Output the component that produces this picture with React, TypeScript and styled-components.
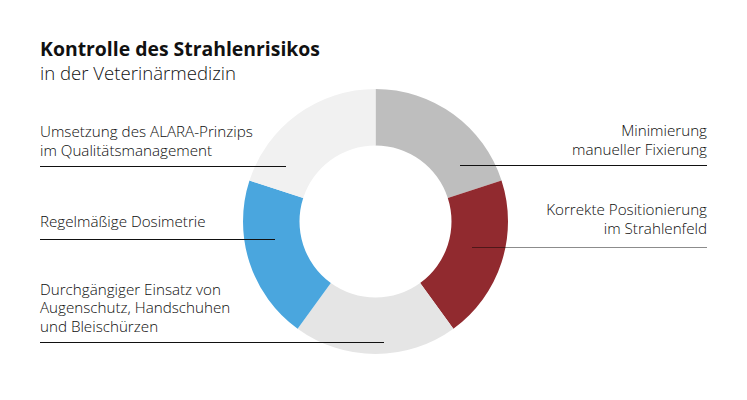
import React from 'react';
import styled, { createGlobalStyle } from 'styled-components';

const GlobalStyle = createGlobalStyle`
  html, body {
    margin: 0;
    padding: 0;
    background: #fff;
  }
  body {
    font-family: "Open Sans", "Liberation Sans", sans-serif;
    color: #1a1a1a;
  }
`;

type Segment = { color: string };

const segments: Segment[] = [
  { color: '#bebebe' },
  { color: '#912a2f' },
  { color: '#e5e5e5' },
  { color: '#4aa6de' },
  { color: '#f1f1f1' },
];

const OUTER = 132.5;
const INNER = 76;

// Punkt auf dem Kreis, 0° = oben, im Uhrzeigersinn
function point(r: number, deg: number) {
  const rad = (deg * Math.PI) / 180;
  return [OUTER + r * Math.sin(rad), OUTER - r * Math.cos(rad)];
}

function arcPath(start: number, end: number) {
  const [x1, y1] = point(OUTER, start);
  const [x2, y2] = point(OUTER, end);
  const [x3, y3] = point(INNER, end);
  const [x4, y4] = point(INNER, start);
  return `M${x1} ${y1} A${OUTER} ${OUTER} 0 0 1 ${x2} ${y2} L${x3} ${y3} A${INNER} ${INNER} 0 0 0 ${x4} ${y4} Z`;
}

function Donut() {
  const step = 360 / segments.length;
  return (
    <DonutSvg width={OUTER * 2} height={OUTER * 2} viewBox={`0 0 ${OUTER * 2} ${OUTER * 2}`}>
      {segments.map((s, i) => (
        <path key={i} d={arcPath(i * step, (i + 1) * step)} fill={s.color} />
      ))}
    </DonutSvg>
  );
}

function App() {
  return (
    <>
      <GlobalStyle />
      <Page>
        <Header>
          <Title>Kontrolle des Strahlenrisikos</Title>
          <Subtitle>in der Veterinärmedizin</Subtitle>
        </Header>
        <Chart>
          <Donut />
          <LeftColumn>
            <Label $line={246} $top={33} $pad={7}>
              Umsetzung des ALARA-Prinzips
              <br />
              im Qualitätsmanagement
            </Label>
            <Label $line={235} $top={45} $pad={8}>
              Regelmäßige Dosimetrie
            </Label>
            <Label $line={344} $top={40} $pad={7}>
              Durchgängiger Einsatz von
              <br />
              Augenschutz, Handschuhen
              <br />
              und Bleischürzen
            </Label>
          </LeftColumn>
          <RightColumn>
            <Label $line={247} $top={32} $pad={7} $right>
              Minimierung
              <br />
              manueller Fixierung
            </Label>
            <Label $line={235} $top={34} $pad={10} $right $soft>
              Korrekte Positionierung
              <br />
              im Strahlenfeld
            </Label>
          </RightColumn>
        </Chart>
      </Page>
    </>
  );
}

export default App;

const Page = styled.div`
  width: 747px;
  height: 400px;
  box-sizing: border-box;
  padding: 37px 40px 0 40px;
  overflow: hidden;
`;

const Header = styled.div`
  display: flex;
  flex-direction: column;
`;

const Title = styled.h1`
  margin: 0;
  font-size: 19.4px;
  line-height: 24px;
  font-weight: 700;
  color: #111;
`;

const Subtitle = styled.p`
  margin: 0;
  font-size: 18.6px;
  line-height: 24px;
  font-weight: 300;
  color: #111;
`;

const Chart = styled.div`
  display: grid;
  grid-template-areas: 'stack';
  margin-top: 4px;
`;

const DonutSvg = styled.svg`
  grid-area: stack;
  justify-self: start;
  margin-left: 202.5px;
  display: block;
`;

const LeftColumn = styled.div`
  grid-area: stack;
  display: flex;
  flex-direction: column;
  align-items: flex-start;
`;

const RightColumn = styled.div`
  grid-area: stack;
  display: flex;
  flex-direction: column;
  align-items: flex-end;
`;

const Label = styled.div<{ $line: number; $top: number; $pad: number; $right?: boolean; $soft?: boolean }>`
  width: ${(p) => p.$line}px;
  margin-top: ${(p) => p.$top}px;
  padding-bottom: ${(p) => p.$pad}px;
  border-bottom: 1px solid ${(p) => (p.$soft ? 'rgba(0, 0, 0, 0.45)' : '#111')};
  font-size: 15.2px;
  line-height: 18.5px;
  font-weight: 300;
  color: #0d0d0d;
  text-align: ${(p) => (p.$right ? 'right' : 'left')};
`;
